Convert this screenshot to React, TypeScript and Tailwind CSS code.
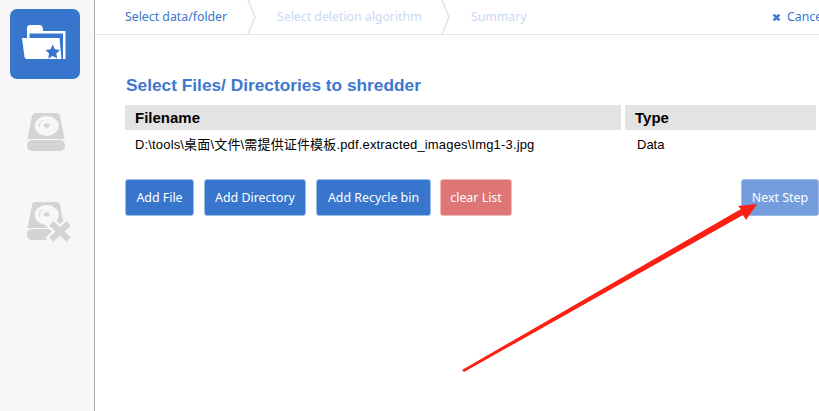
const sans = "font-['Liberation_Sans',Arial,'Noto_Sans_CJK_SC',sans-serif]";

function FolderIcon() {
  return (
    <svg width="44" height="34" viewBox="0 0 44 34">
      <path d="M5 3Q5 0 8 0H18Q20 0 21 3.5V6H43.5V34H41V8.5H7.5V13H5Z" fill="#fff" />
      <path d="M0 13H37.5L39.5 34H4.5Q3 34 2.5 32Z" fill="#fff" />
      <path d="M30.7 19.5L32.9 24.3L38 25L34.3 28.5L35.2 33.5L30.7 31L26.2 33.5L27.1 28.5L23.4 25L28.5 24.3Z" fill="#3875cc" />
    </svg>
  );
}

function DriveIcon({ withX }: { withX?: boolean }) {
  return (
    <svg width="44" height="40" viewBox="0 0 44 40">
      <path d="M5 3Q5.5 0 8.5 0H29.5Q32.5 0 33 3L37.5 26H0.5Z" fill="#d5d4d4" />
      <rect x="0" y="27" width="38" height="11" rx="5" fill="#d5d4d4" />
      <ellipse cx="19.7" cy="13" rx="12" ry="10" fill="#f7f7f7" />
      <ellipse cx="19.7" cy="12.5" rx="3" ry="2.2" fill="#d5d4d4" />
      <path d="M12 14Q12 9 16 7" stroke="#d5d4d4" strokeWidth="1" fill="none" />
      {withX && (
        <g fill="none" strokeLinecap="square">
          <path d="M26 23L40 36M40 23L26 36" stroke="#f7f7f7" strokeWidth="11" />
          <path d="M26.5 23.5L39.5 35.5M39.5 23.5L26.5 35.5" stroke="#d5d4d4" strokeWidth="6" />
        </g>
      )}
    </svg>
  );
}

function Chevron() {
  return (
    <svg width="10" height="34" viewBox="0 0 10 34" className="shrink-0">
      <path d="M1 0L8 17L1 34" stroke="#e3e3e3" strokeWidth="1.5" fill="none" />
    </svg>
  );
}

function Btn({ label, className }: { label: string; className: string }) {
  return (
    <button className={`h-[37px] rounded-[3px] border pt-px text-[12.4px] text-white ${className}`}>
      {label}
    </button>
  );
}

export default function App() {
  return (
    <div className={`relative flex h-[411px] w-[819px] overflow-hidden bg-white font-['Noto_Sans','Noto_Sans_CJK_SC',sans-serif]`}>
      <aside className="flex w-[95px] shrink-0 flex-col border-r border-[#ababab] bg-[#f7f7f7] pt-[9px] pl-[10px]">
        <div className="flex h-[70px] w-[70px] items-center justify-center rounded-[7px] bg-[#3875cc] pr-[2px] pb-[4px]">
          <FolderIcon />
        </div>
        <div className="mt-[34px] ml-[17px] h-[38px]">
          <DriveIcon />
        </div>
        <div className="mt-[51px] ml-[17px]">
          <DriveIcon withX />
        </div>
      </aside>

      <main className="min-w-0 flex-1">
        <header className="flex h-[35px] items-center border-b border-[#e3e3e3] pl-[30px] text-[12.3px] whitespace-nowrap">
          <span className="w-[122px] text-[#3a76cf]">Select data/folder</span>
          <Chevron />
          <span className="ml-[20px] w-[164px] text-[#c9d9f3]">Select deletion algorithm</span>
          <Chevron />
          <span className="ml-[20px] text-[#c9d9f3]">Summary</span>
          <span className="ml-auto flex w-[47px] shrink-0 items-center gap-[6px] overflow-hidden text-[#3a76cf]">
            <svg width="9" height="9" viewBox="0 0 9 9" className="shrink-0">
              <path d="M1 2.5L2.5 1L4.5 3L6.5 1L8 2.5L6 4.5L8 6.5L6.5 8L4.5 6L2.5 8L1 6.5L3 4.5Z" fill="#3a76cf" stroke="#3a76cf" strokeWidth="0.5" />
            </svg>
            Cancel
          </span>
        </header>

        <section className="pl-[30px]">
          <h1 className={`mt-[40px] ml-[1px] h-[30px] text-[17.3px] leading-[20px] font-bold text-[#3d78cf] ${sans}`}>
            Select Files/ Directories to shredder
          </h1>
          <div className={`flex h-[25px] gap-[4px] text-[15px] leading-[25px] font-bold text-black ${sans}`}>
            <div className="w-[496px] bg-[#e3e3e3] pl-[10px]">Filename</div>
            <div className="w-[191px] bg-[#e3e3e3] pl-[10px]">Type</div>
          </div>
          <div className={`flex h-[28px] pt-px text-[13px] leading-[28px] text-black ${sans}`}>
            <div className="w-[500px] pl-[10px] tracking-[0.16px] whitespace-nowrap">D:\tools\桌面\文件\需提供证件模板.pdf.extracted_images\Img1-3.jpg</div>
            <div className="pl-[12px]">Data</div>
          </div>
          <div className="mt-[21px] flex">
            <Btn label="Add File" className="w-[69px] border-[#9dbce8] bg-[#3875cc]" />
            <Btn label="Add Directory" className="ml-[10px] w-[102px] border-[#9dbce8] bg-[#3875cc]" />
            <Btn label="Add Recycle bin" className="ml-[10px] w-[115px] border-[#9dbce8] bg-[#3875cc]" />
            <Btn label="clear List" className="ml-[9px] w-[72px] border-[#efb9b9] bg-[#de7676]" />
            <Btn label="Next Step" className="ml-[229px] w-[78px] shrink-0 border-[#9dbce8] bg-[#739ddc]" />
          </div>
        </section>
      </main>

      {/* red annotation arrow drawn over the screenshot */}
      <svg width="819" height="411" viewBox="0 0 819 411" className="pointer-events-none absolute top-0 left-0">
        <path d="M462 370L741 209L738 206L757 204L746 220L743 215L464 372Z" fill="#fb1f14" />
      </svg>
    </div>
  );
}
